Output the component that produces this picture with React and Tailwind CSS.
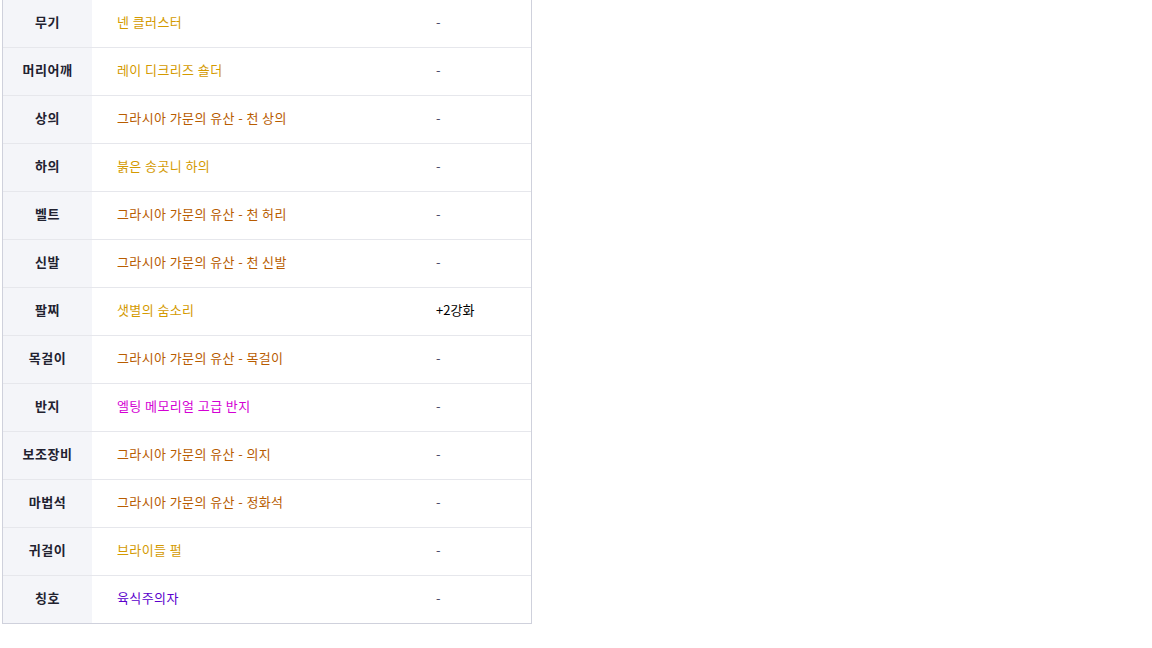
const rows = [
  { slot: '무기', name: '넨 클러스터', color: 'text-[#d49a00]', extra: '-' },
  { slot: '머리어깨', name: '레이 디크리즈 숄더', color: 'text-[#d49a00]', extra: '-' },
  { slot: '상의', name: '그라시아 가문의 유산 - 천 상의', color: 'text-[#b85c00]', extra: '-' },
  { slot: '하의', name: '붉은 송곳니 하의', color: 'text-[#d49a00]', extra: '-' },
  { slot: '벨트', name: '그라시아 가문의 유산 - 천 허리', color: 'text-[#b85c00]', extra: '-' },
  { slot: '신발', name: '그라시아 가문의 유산 - 천 신발', color: 'text-[#b85c00]', extra: '-' },
  { slot: '팔찌', name: '샛별의 숨소리', color: 'text-[#d49a00]', extra: '+2강화' },
  { slot: '목걸이', name: '그라시아 가문의 유산 - 목걸이', color: 'text-[#b85c00]', extra: '-' },
  { slot: '반지', name: '엘팅 메모리얼 고급 반지', color: 'text-[#d400d4]', extra: '-' },
  { slot: '보조장비', name: '그라시아 가문의 유산 - 의지', color: 'text-[#b85c00]', extra: '-' },
  { slot: '마법석', name: '그라시아 가문의 유산 - 정화석', color: 'text-[#b85c00]', extra: '-' },
  { slot: '귀걸이', name: '브라이들 펄', color: 'text-[#d49a00]', extra: '-' },
  { slot: '칭호', name: '육식주의자', color: 'text-[#5a00cc]', extra: '-' },
]

function EquipRow({ row, last }) {
  return (
    <div className={`grid grid-cols-[89px_319px_1fr] ${last ? 'h-[47px]' : 'h-[48px] border-b border-[#e6e7ec]'}`}>
      <div className="bg-[#f4f5f9] flex items-center justify-center pb-[4px] font-bold text-[#222230] tracking-[0.6px]">{row.slot}</div>
      <div className={`flex items-center pl-[25px] pb-[4px] tracking-[0.4px] ${row.color}`}>{row.name}</div>
      <div className={`flex items-center pl-[25px] pb-[4px] ${row.extra === '-' ? 'text-[#4a4a6a]' : 'text-black'}`}>{row.extra}</div>
    </div>
  )
}

export default function App() {
  return (
    <div className="w-[1152px] h-[648px] bg-white" style={{ fontFamily: '"Noto Sans CJK KR", "Noto Sans", sans-serif' }}>
      <div className="ml-[2px] mt-[-1px] w-[530px] border border-[#cfd1dc] text-[13px] leading-none">
        {rows.map((row, i) => (
          <EquipRow key={row.slot} row={row} last={i === rows.length - 1} />
        ))}
      </div>
    </div>
  )
}
